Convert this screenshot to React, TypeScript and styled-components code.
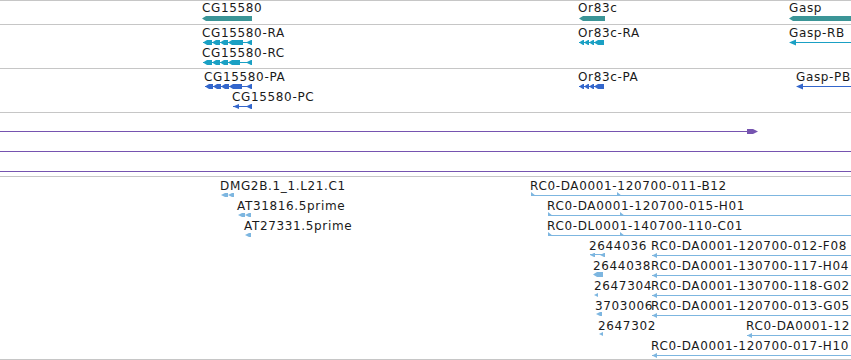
import React from 'react';
import styled, { createGlobalStyle } from 'styled-components';

const Global = createGlobalStyle`
  html, body { margin: 0; padding: 0; background: #ffffff; }
  body { font-family: "DejaVu Sans", "Liberation Sans", sans-serif; }
`;

const View = styled.div`
  width: 851px;
  height: 360px;
  overflow: hidden;
  display: flex;
  flex-direction: column;
  background: #ffffff;
`;

const Track = styled.div<{ $h: number; $last?: boolean }>`
  position: relative;
  flex: none;
  box-sizing: border-box;
  height: ${(p) => p.$h}px;
  border-top: 1px solid #c6c6c6;
  border-bottom: ${(p) => (p.$last ? '1px solid #c6c6c6' : 'none')};
`;

const Canvas = styled.svg`
  position: absolute;
  left: 0;
  top: 0;
  width: 851px;
  height: 100%;
  overflow: visible;
`;

const Label = styled.div`
  position: absolute;
  font-size: 12px;
  line-height: 14px;
  letter-spacing: 0.65px;
  color: #1a1a1a;
  white-space: nowrap;
`;

type Lab = { t: string; x: number; y: number };
type Shape =
  | { k: 'chev'; x0: number; x1: number; y: number; h: number }
  | { k: 'rect'; x0: number; x1: number; y: number; h: number }
  | { k: 'line'; x0: number; x1: number; y: number }
  | { k: 'arrL'; x: number; y: number; h: number; w: number }
  | { k: 'arrR'; x: number; y: number; h: number; w: number }
  | { k: 'flag'; x: number; y: number };

type TrackDef = { y: number; h: number; color: string; labels: Lab[]; shapes: Shape[]; last?: boolean };

const chevRow = (xs: number[], y: number, h: number): Shape[] => {
  const out: Shape[] = [];
  for (let i = 0; i < xs.length - 1; i++) out.push({ k: 'chev', x0: xs[i], x1: xs[i + 1], y, h });
  return out;
};

const estLine = (x0: number, y: number): Shape[] => [
  { k: 'line', x0, x1: 851, y },
  { k: 'arrL', x: x0, y: y + 0.5, h: 5, w: 5 },
];

const tracks: TrackDef[] = [
  {
    y: 0,
    h: 24,
    color: '#3b9597',
    labels: [
      { t: 'CG15580', x: 202, y: 1 },
      { t: 'Or83c', x: 578, y: 1 },
      { t: 'Gasp', x: 789, y: 1 },
    ],
    shapes: [
      { k: 'chev', x0: 202, x1: 252, y: 16, h: 5 },
      { k: 'chev', x0: 579, x1: 605, y: 16, h: 5 },
      { k: 'chev', x0: 789, x1: 851, y: 16, h: 5 },
    ],
  },
  {
    y: 24,
    h: 44,
    color: '#1aa0c4',
    labels: [
      { t: 'CG15580-RA', x: 202, y: 26 },
      { t: 'CG15580-RC', x: 202, y: 46 },
      { t: 'Or83c-RA', x: 578, y: 26 },
      { t: 'Gasp-RB', x: 789, y: 26 },
    ],
    shapes: [
      { k: 'line', x0: 203, x1: 252, y: 42 },
      ...chevRow([203, 212, 220, 228, 243], 40, 5),
      { k: 'arrL', x: 246, y: 42.5, h: 5, w: 5 },
      { k: 'rect', x0: 251, x1: 252, y: 40, h: 5 },
      { k: 'line', x0: 203, x1: 252, y: 62 },
      ...chevRow([203, 212, 220, 228, 240], 60, 5),
      { k: 'arrL', x: 246, y: 62.5, h: 5, w: 5 },
      { k: 'rect', x0: 251, x1: 252, y: 60, h: 5 },
      { k: 'line', x0: 579, x1: 604, y: 42 },
      ...chevRow([579, 584, 589, 594, 604], 40, 5),
      { k: 'line', x0: 790, x1: 851, y: 42 },
      { k: 'arrL', x: 789, y: 42.5, h: 6, w: 7 },
    ],
  },
  {
    y: 68,
    h: 44,
    color: '#3366cc',
    labels: [
      { t: 'CG15580-PA', x: 204, y: 70 },
      { t: 'CG15580-PC', x: 232, y: 90 },
      { t: 'Or83c-PA', x: 578, y: 70 },
      { t: 'Gasp-PB', x: 796, y: 70 },
    ],
    shapes: [
      { k: 'line', x0: 205, x1: 252, y: 86 },
      ...chevRow([205, 213, 221, 229, 242], 84, 5),
      { k: 'arrL', x: 246, y: 86.5, h: 5, w: 5 },
      { k: 'rect', x0: 251, x1: 252, y: 84, h: 5 },
      { k: 'line', x0: 233, x1: 252, y: 106 },
      { k: 'arrL', x: 233, y: 106.5, h: 5, w: 6 },
      { k: 'arrL', x: 246, y: 106.5, h: 5, w: 5 },
      { k: 'rect', x0: 251, x1: 252, y: 104, h: 5 },
      { k: 'line', x0: 579, x1: 604, y: 86 },
      ...chevRow([579, 584, 589, 594, 604], 84, 5),
      { k: 'line', x0: 797, x1: 851, y: 86 },
      { k: 'arrL', x: 796, y: 86.5, h: 6, w: 7 },
    ],
  },
  {
    y: 112,
    h: 64,
    color: '#7654b0',
    labels: [],
    shapes: [
      { k: 'line', x0: 0, x1: 748, y: 131 },
      { k: 'rect', x0: 747, x1: 753, y: 129, h: 5 },
      { k: 'arrR', x: 758, y: 131.5, h: 5, w: 5 },
      { k: 'line', x0: 0, x1: 851, y: 151 },
      { k: 'line', x0: 0, x1: 851, y: 171 },
    ],
  },
  {
    y: 176,
    h: 184,
    color: '#7db6e0',
    last: true,
    labels: [
      { t: 'DMG2B.1_1.L21.C1', x: 220, y: 179 },
      { t: 'AT31816.5prime', x: 237, y: 199 },
      { t: 'AT27331.5prime', x: 244, y: 219 },
      { t: 'RC0-DA0001-120700-011-B12', x: 530, y: 179 },
      { t: 'RC0-DA0001-120700-015-H01', x: 547, y: 199 },
      { t: 'RC0-DL0001-140700-110-C01', x: 547, y: 219 },
      { t: '2644036', x: 589, y: 239 },
      { t: 'RC0-DA0001-120700-012-F08', x: 651, y: 239 },
      { t: '2644038', x: 593, y: 259 },
      { t: 'RC0-DA0001-130700-117-H04', x: 651, y: 259 },
      { t: '2647304', x: 594, y: 279 },
      { t: 'RC0-DA0001-130700-118-G02', x: 651, y: 279 },
      { t: '3703006', x: 595, y: 299 },
      { t: 'RC0-DA0001-120700-013-G05', x: 651, y: 299 },
      { t: '2647302', x: 598, y: 319 },
      { t: 'RC0-DA0001-12', x: 746, y: 319 },
      { t: 'RC0-DA0001-120700-017-H10', x: 651, y: 339 },
    ],
    shapes: [
      ...chevRow([221, 228, 234], 193, 4),
      ...chevRow([238, 245, 251], 213, 4),
      { k: 'chev', x0: 245, x1: 251, y: 233, h: 4 },
      { k: 'line', x0: 531, x1: 851, y: 195 },
      { k: 'flag', x: 531, y: 196 },
      { k: 'flag', x: 617, y: 196 },
      { k: 'line', x0: 548, x1: 851, y: 215 },
      { k: 'flag', x: 548, y: 216 },
      { k: 'flag', x: 620, y: 216 },
      { k: 'line', x0: 548, x1: 851, y: 235 },
      { k: 'flag', x: 548, y: 236 },
      { k: 'flag', x: 620, y: 236 },
      { k: 'line', x0: 590, x1: 605, y: 254 },
      { k: 'chev', x0: 590, x1: 595, y: 253, h: 4 },
      { k: 'chev', x0: 600, x1: 605, y: 253, h: 4 },
      ...estLine(652, 255),
      { k: 'chev', x0: 593, x1: 603, y: 272, h: 5 },
      ...estLine(652, 275),
      { k: 'chev', x0: 594, x1: 598, y: 293, h: 4 },
      ...estLine(652, 295),
      { k: 'chev', x0: 596, x1: 602, y: 312, h: 4 },
      ...estLine(652, 315),
      { k: 'chev', x0: 599, x1: 603, y: 332, h: 4 },
      ...estLine(747, 335),
      ...estLine(652, 355),
    ],
  },
];

const ShapeView: React.FC<{ s: Shape; c: string }> = ({ s, c }) => {
  switch (s.k) {
    case 'chev': {
      const m = s.y + s.h / 2;
      const a = Math.min(4, s.x1 - s.x0);
      return (
        <polygon
          fill={c}
          points={`${s.x0},${m} ${s.x0 + a},${s.y} ${s.x1},${s.y} ${s.x1},${s.y + s.h} ${s.x0 + a},${s.y + s.h}`}
        />
      );
    }
    case 'rect':
      return <rect fill={c} x={s.x0} y={s.y} width={s.x1 - s.x0} height={s.h} />;
    case 'line':
      return <rect fill={c} x={s.x0} y={s.y} width={s.x1 - s.x0} height={1} />;
    case 'arrL':
      return (
        <polygon
          fill={c}
          points={`${s.x},${s.y} ${s.x + s.w},${s.y - s.h / 2} ${s.x + s.w},${s.y + s.h / 2}`}
        />
      );
    case 'arrR':
      return (
        <polygon
          fill={c}
          points={`${s.x},${s.y} ${s.x - s.w},${s.y - s.h / 2} ${s.x - s.w},${s.y + s.h / 2}`}
        />
      );
    case 'flag':
      return <polygon fill={c} points={`${s.x},${s.y - 4} ${s.x + 5},${s.y} ${s.x},${s.y}`} />;
  }
};

const TrackView: React.FC<{ d: TrackDef }> = ({ d }) => {
  const top = d.y + 1;
  const innerH = d.h - 1 - (d.last ? 1 : 0);
  return (
    <Track $h={d.h} $last={d.last}>
      <Canvas viewBox={`0 ${top} 851 ${innerH}`} preserveAspectRatio="none">
        {d.shapes.map((s, i) => (
          <ShapeView key={i} s={s} c={d.color} />
        ))}
      </Canvas>
      {d.labels.map((l) => (
        <Label key={l.t} style={{ left: l.x, top: l.y - top }}>
          {l.t}
        </Label>
      ))}
    </Track>
  );
};

export default function App() {
  return (
    <>
      <Global />
      <View>
        {tracks.map((t) => (
          <TrackView key={t.y} d={t} />
        ))}
      </View>
    </>
  );
}
